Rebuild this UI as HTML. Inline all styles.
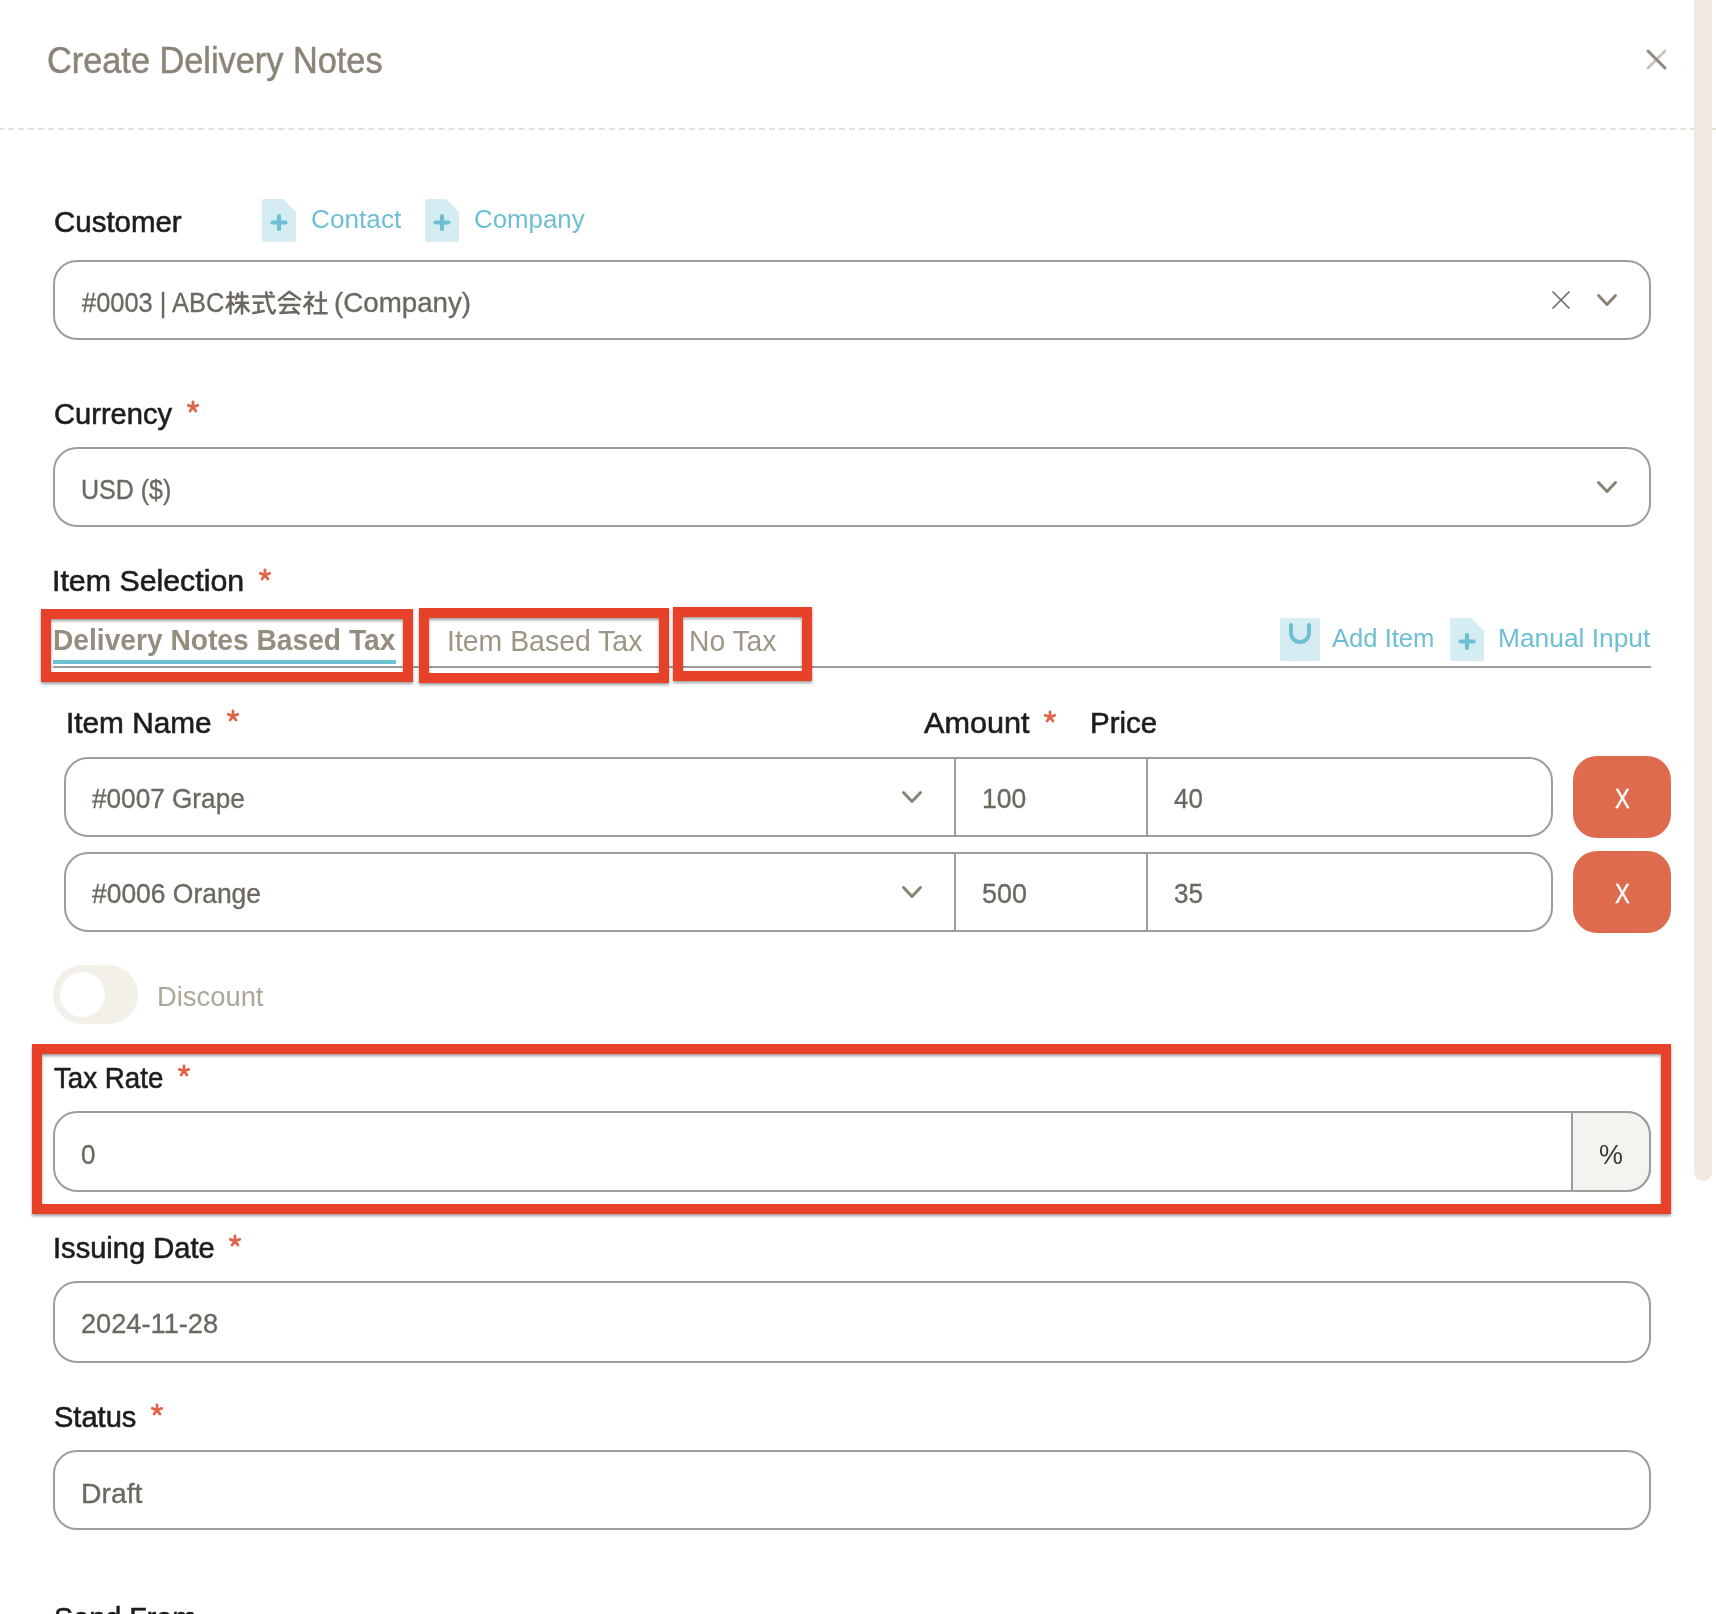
<!DOCTYPE html>
<html><head><meta charset="utf-8">
<style>
html,body{margin:0;padding:0;background:#fff;}
body{width:1716px;height:1614px;position:relative;overflow:hidden;font-family:"Liberation Sans",sans-serif;}
.t{position:absolute;white-space:nowrap;line-height:1;transform-origin:0 0;}
.box{position:absolute;box-sizing:border-box;border:2px solid #9d9d9d;background:transparent;}
.red{position:absolute;box-sizing:border-box;border:10px solid #e8412a;filter:drop-shadow(0.5px 2px 1.5px rgba(0,0,0,0.38));}
</style></head><body>
<svg style="position:absolute;left:0;top:128px" width="1716" height="2"><line x1="0" y1="1" x2="1716" y2="1" stroke="#e4e1d9" stroke-width="2" stroke-dasharray="6 4.012" stroke-dashoffset="2"/></svg>
<div style="position:absolute;left:1694px;top:-20px;width:18px;height:1201px;background:#f2eae1;border-radius:9px"></div>
<div class="box" style="left:53px;top:260px;width:1598px;height:80px;border-radius:24px;"></div>
<div class="box" style="left:53px;top:447px;width:1598px;height:80px;border-radius:24px;"></div>
<div class="box" style="left:64px;top:757px;width:1489px;height:80px;border-radius:24px;"></div>
<div class="box" style="left:64px;top:852px;width:1489px;height:80px;border-radius:24px;"></div>
<div class="box" style="left:53px;top:1111px;width:1598px;height:81px;border-radius:24px;"></div>
<div class="box" style="left:53px;top:1281px;width:1598px;height:82px;border-radius:24px;"></div>
<div class="box" style="left:53px;top:1450px;width:1598px;height:80px;border-radius:24px;"></div>
<div style="position:absolute;left:954px;top:757px;width:2px;height:80px;background:#9d9d9d"></div>
<div style="position:absolute;left:1146px;top:757px;width:2px;height:80px;background:#9d9d9d"></div>
<div style="position:absolute;left:954px;top:852px;width:2px;height:80px;background:#9d9d9d"></div>
<div style="position:absolute;left:1146px;top:852px;width:2px;height:80px;background:#9d9d9d"></div>
<div style="position:absolute;left:1571px;top:1111px;width:80px;height:81px;box-sizing:border-box;border:2px solid #9d9d9d;border-radius:0 24px 24px 0;background:#f5f3ef"></div>
<div style="position:absolute;left:53px;top:666px;width:1598px;height:2px;background:#9d9d9d"></div>
<div style="position:absolute;left:53px;top:660px;width:343px;height:4px;background:#6ec1d6"></div>
<div style="position:absolute;left:1573px;top:756px;width:98px;height:82px;border-radius:24px;background:#df6b4f"></div>
<div style="position:absolute;left:1573px;top:851px;width:98px;height:82px;border-radius:24px;background:#df6b4f"></div>
<div style="position:absolute;left:53px;top:965px;width:85px;height:59px;border-radius:30px;background:#f3efe9"></div>
<div style="position:absolute;left:60px;top:972px;width:45px;height:45px;border-radius:50%;background:#fff"></div>
<svg style="position:absolute;left:262px;top:199px" width="34" height="43" viewBox="0 0 34 43"><path d="M2 0 H21 L34 13 V41 Q34 43 32 43 H2 Q0 43 0 41 V2 Q0 0 2 0Z" fill="#d5ecf2"/><path d="M10.5 23.5 H23.5 M17.0 17.0 V30.0" stroke="#6dbfd3" stroke-width="4.2" stroke-linecap="round"/></svg>
<svg style="position:absolute;left:425px;top:199px" width="34" height="43" viewBox="0 0 34 43"><path d="M2 0 H21 L34 13 V41 Q34 43 32 43 H2 Q0 43 0 41 V2 Q0 0 2 0Z" fill="#d5ecf2"/><path d="M10.5 23.5 H23.5 M17.0 17.0 V30.0" stroke="#6dbfd3" stroke-width="4.2" stroke-linecap="round"/></svg>
<svg style="position:absolute;left:1450px;top:618px" width="34" height="43" viewBox="0 0 34 43"><path d="M2 0 H21 L34 13 V41 Q34 43 32 43 H2 Q0 43 0 41 V2 Q0 0 2 0Z" fill="#d5ecf2"/><path d="M10.5 23.5 H23.5 M17.0 17.0 V30.0" stroke="#6dbfd3" stroke-width="4.2" stroke-linecap="round"/></svg>
<svg style="position:absolute;left:1280px;top:618px" width="40" height="43" viewBox="0 0 40 43"><rect x="0" y="0" width="40" height="43" rx="2" fill="#d5ecf2"/><path d="M11 7 V15 A9 9 0 0 0 29 15 V7" fill="none" stroke="#6dbfd3" stroke-width="4" stroke-linecap="round"/></svg>
<svg style="position:absolute;left:1595px;top:292px" width="24" height="16" viewBox="-2 -2 24 16"><path d="M1.5 1.5 L10.0 10.5 L18.5 1.5" fill="none" stroke="#8a8477" stroke-width="3" stroke-linecap="round" stroke-linejoin="round"/></svg>
<svg style="position:absolute;left:1595px;top:479px" width="24" height="16" viewBox="-2 -2 24 16"><path d="M1.5 1.5 L10.0 10.5 L18.5 1.5" fill="none" stroke="#8a8477" stroke-width="3" stroke-linecap="round" stroke-linejoin="round"/></svg>
<svg style="position:absolute;left:900px;top:789px" width="24" height="16" viewBox="-2 -2 24 16"><path d="M1.5 1.5 L10.0 10.5 L18.5 1.5" fill="none" stroke="#8a8477" stroke-width="3" stroke-linecap="round" stroke-linejoin="round"/></svg>
<svg style="position:absolute;left:900px;top:884px" width="24" height="16" viewBox="-2 -2 24 16"><path d="M1.5 1.5 L10.0 10.5 L18.5 1.5" fill="none" stroke="#8a8477" stroke-width="3" stroke-linecap="round" stroke-linejoin="round"/></svg>
<svg style="position:absolute;left:1550px;top:289px" width="22" height="22" viewBox="0 0 22 22"><path d="M3 3 L19 19 M19 3 L3 19" stroke="#716d64" stroke-width="1.7" stroke-linecap="round"/></svg>
<svg style="position:absolute;left:1644.6px;top:47.6px" width="24" height="24" viewBox="0 0 24 24"><path d="M20 3 L3 20" stroke="#cbc7bf" stroke-width="3" stroke-linecap="round"/><path d="M3 3 L20 20" stroke="#8f897d" stroke-width="3" stroke-linecap="round"/></svg>
<svg style="position:absolute;left:179.00px;top:393.00px" width="28" height="28" viewBox="0 0 28 28"><path d="M14.00 14.00 L14.00 9.00 M14.00 14.00 L9.24 12.45 M14.00 14.00 L11.06 18.05 M14.00 14.00 L16.94 18.05 M14.00 14.00 L18.76 12.45" stroke="#e0654a" stroke-width="2.8" stroke-linecap="round"/></svg>
<svg style="position:absolute;left:251.20px;top:561.00px" width="28" height="28" viewBox="0 0 28 28"><path d="M14.00 14.00 L14.00 9.00 M14.00 14.00 L9.24 12.45 M14.00 14.00 L11.06 18.05 M14.00 14.00 L16.94 18.05 M14.00 14.00 L18.76 12.45" stroke="#e0654a" stroke-width="2.8" stroke-linecap="round"/></svg>
<svg style="position:absolute;left:218.60px;top:702.00px" width="28" height="28" viewBox="0 0 28 28"><path d="M14.00 14.00 L14.00 9.00 M14.00 14.00 L9.24 12.45 M14.00 14.00 L11.06 18.05 M14.00 14.00 L16.94 18.05 M14.00 14.00 L18.76 12.45" stroke="#e0654a" stroke-width="2.8" stroke-linecap="round"/></svg>
<svg style="position:absolute;left:1035.60px;top:702.80px" width="28" height="28" viewBox="0 0 28 28"><path d="M14.00 14.00 L14.00 9.00 M14.00 14.00 L9.24 12.45 M14.00 14.00 L11.06 18.05 M14.00 14.00 L16.94 18.05 M14.00 14.00 L18.76 12.45" stroke="#e0654a" stroke-width="2.8" stroke-linecap="round"/></svg>
<svg style="position:absolute;left:170.30px;top:1057.30px" width="28" height="28" viewBox="0 0 28 28"><path d="M14.00 14.00 L14.00 9.00 M14.00 14.00 L9.24 12.45 M14.00 14.00 L11.06 18.05 M14.00 14.00 L16.94 18.05 M14.00 14.00 L18.76 12.45" stroke="#e0654a" stroke-width="2.8" stroke-linecap="round"/></svg>
<svg style="position:absolute;left:221.00px;top:1227.20px" width="28" height="28" viewBox="0 0 28 28"><path d="M14.00 14.00 L14.00 9.00 M14.00 14.00 L9.24 12.45 M14.00 14.00 L11.06 18.05 M14.00 14.00 L16.94 18.05 M14.00 14.00 L18.76 12.45" stroke="#e0654a" stroke-width="2.8" stroke-linecap="round"/></svg>
<svg style="position:absolute;left:142.60px;top:1396.30px" width="28" height="28" viewBox="0 0 28 28"><path d="M14.00 14.00 L14.00 9.00 M14.00 14.00 L9.24 12.45 M14.00 14.00 L11.06 18.05 M14.00 14.00 L16.94 18.05 M14.00 14.00 L18.76 12.45" stroke="#e0654a" stroke-width="2.8" stroke-linecap="round"/></svg>
<svg style="position:absolute;left:220px;top:285px" width="120" height="40" viewBox="0 0 1716 572"><path d="M90 170 H210 M150 90 V425 M150 235 L85 335 M160 245 L205 290 M262 110 L222 215 M235 165 H405 M215 255 H415 M315 90 V425 M310 270 L210 400 M320 270 L420 385 M460 165 H785 M710 98 L752 130 M660 90 Q675 300 740 400 Q765 430 790 350 M475 255 H625 M550 255 V385 M462 405 L640 368 M832 225 L990 98 L1158 215 M905 205 H1075 M845 285 H1145 M952 292 L885 398 M850 402 L1110 387 M1040 325 L1135 418 M1272 90 V135 M1205 170 H1325 L1195 320 M1272 240 V425 M1285 255 L1335 310 M1442 90 V400 M1355 220 H1530 M1335 405 H1540" fill="none" stroke="#6c685f" stroke-width="36" stroke-linecap="butt" stroke-linejoin="miter"/></svg>
<div class="t" style="left:47.05px;top:42.72px;font-size:36px;color:#8b8478;transform:scaleX(0.9530);-webkit-text-stroke:0.5px #8b8478;">Create Delivery Notes</div>
<div class="t" style="left:54.03px;top:206.79px;font-size:30.25px;color:#1f1d19;transform:scaleX(0.9738);-webkit-text-stroke:0.6px #1f1d19;">Customer</div>
<div class="t" style="left:53.64px;top:398.79px;font-size:30.25px;color:#1f1d19;transform:scaleX(0.9623);-webkit-text-stroke:0.6px #1f1d19;">Currency</div>
<div class="t" style="left:52.49px;top:565.79px;font-size:30.25px;color:#1f1d19;transform:scaleX(1.0027);-webkit-text-stroke:0.6px #1f1d19;">Item Selection</div>
<div class="t" style="left:66.23px;top:707.99px;font-size:30.25px;color:#1f1d19;transform:scaleX(0.9848);-webkit-text-stroke:0.6px #1f1d19;">Item Name</div>
<div class="t" style="left:923.80px;top:708.39px;font-size:30.25px;color:#1f1d19;transform:scaleX(1.0114);-webkit-text-stroke:0.6px #1f1d19;">Amount</div>
<div class="t" style="left:1089.75px;top:708.39px;font-size:30.25px;color:#1f1d19;transform:scaleX(0.9742);-webkit-text-stroke:0.6px #1f1d19;">Price</div>
<div class="t" style="left:54.00px;top:1062.79px;font-size:30.25px;color:#1f1d19;transform:scaleX(0.9160);-webkit-text-stroke:0.6px #1f1d19;">Tax Rate</div>
<div class="t" style="left:53.38px;top:1232.99px;font-size:30.25px;color:#1f1d19;transform:scaleX(0.9618);-webkit-text-stroke:0.6px #1f1d19;">Issuing Date</div>
<div class="t" style="left:53.64px;top:1401.89px;font-size:30.25px;color:#1f1d19;transform:scaleX(0.9600);-webkit-text-stroke:0.6px #1f1d19;">Status</div>
<div class="t" style="left:53.65px;top:1602.59px;font-size:30.25px;color:#1f1d19;transform:scaleX(0.9510);-webkit-text-stroke:0.6px #1f1d19;">Send From</div>
<div class="t" style="left:82.00px;top:288.99px;font-size:28.0px;color:#6c685f;transform:scaleX(0.9077);-webkit-text-stroke:0.35px #6c685f;">#0003 | ABC</div>
<div class="t" style="left:334.41px;top:288.99px;font-size:28.0px;color:#6c685f;transform:scaleX(0.9897);-webkit-text-stroke:0.35px #6c685f;">(Company)</div>
<div class="t" style="left:81.21px;top:475.99px;font-size:28.0px;color:#6c685f;transform:scaleX(0.8929);-webkit-text-stroke:0.35px #6c685f;">USD ($)</div>
<div class="t" style="left:92.20px;top:784.99px;font-size:28.0px;color:#6c685f;transform:scaleX(0.9344);-webkit-text-stroke:0.35px #6c685f;">#0007 Grape</div>
<div class="t" style="left:92.00px;top:879.99px;font-size:28.0px;color:#6c685f;transform:scaleX(0.9438);-webkit-text-stroke:0.35px #6c685f;">#0006 Orange</div>
<div class="t" style="left:982.01px;top:784.79px;font-size:28.0px;color:#6c685f;transform:scaleX(0.9455);-webkit-text-stroke:0.35px #6c685f;">100</div>
<div class="t" style="left:981.84px;top:880.19px;font-size:28.0px;color:#6c685f;transform:scaleX(0.9600);-webkit-text-stroke:0.35px #6c685f;">500</div>
<div class="t" style="left:1174.30px;top:784.79px;font-size:28.0px;color:#6c685f;transform:scaleX(0.9258);-webkit-text-stroke:0.35px #6c685f;">40</div>
<div class="t" style="left:1173.57px;top:880.19px;font-size:28.0px;color:#6c685f;transform:scaleX(0.9267);-webkit-text-stroke:0.35px #6c685f;">35</div>
<div class="t" style="left:81.07px;top:1140.99px;font-size:28.0px;color:#6c685f;transform:scaleX(0.9286);-webkit-text-stroke:0.35px #6c685f;">0</div>
<div class="t" style="left:81.03px;top:1309.99px;font-size:28.0px;color:#6c685f;transform:scaleX(0.9712);-webkit-text-stroke:0.35px #6c685f;">2024-11-28</div>
<div class="t" style="left:80.98px;top:1479.99px;font-size:28.0px;color:#6c685f;transform:scaleX(1.0119);-webkit-text-stroke:0.35px #6c685f;">Draft</div>
<div class="t" style="left:311.01px;top:205.86px;font-size:26.5px;color:#6dbfd3;transform:scaleX(0.9890);">Contact</div>
<div class="t" style="left:473.82px;top:205.86px;font-size:26.5px;color:#6dbfd3;transform:scaleX(0.9752);">Company</div>
<div class="t" style="left:1332.40px;top:625.26px;font-size:26.5px;color:#6dbfd3;transform:scaleX(0.9657);">Add Item</div>
<div class="t" style="left:1498.41px;top:625.26px;font-size:26.5px;color:#6dbfd3;transform:scaleX(0.9940);">Manual Input</div>
<div class="t" style="left:52.61px;top:625.17px;font-size:29.8px;color:#958d7f;font-weight:700;transform:scaleX(0.9453);">Delivery Notes Based Tax</div>
<div class="t" style="left:447.49px;top:626.07px;font-size:29.8px;color:#9d9585;transform:scaleX(0.9537);">Item Based Tax</div>
<div class="t" style="left:688.80px;top:626.07px;font-size:29.8px;color:#9d9585;transform:scaleX(0.9478);">No Tax</div>
<div class="t" style="left:157.17px;top:983.84px;font-size:27px;color:#aca797;transform:scaleX(1.0136);">Discount</div>
<div class="t" style="left:1614.50px;top:785.02px;font-size:27.5px;color:#ffffff;transform:scaleX(0.8056);-webkit-text-stroke:0.4px #ffffff;">X</div>
<div class="t" style="left:1614.50px;top:880.02px;font-size:27.5px;color:#ffffff;transform:scaleX(0.8056);-webkit-text-stroke:0.4px #ffffff;">X</div>
<div class="t" style="left:1598.52px;top:1141.42px;font-size:27.5px;color:#3a3834;transform:scaleX(0.9783);">%</div>
<div class="red" style="left:41px;top:609px;width:372px;height:73px"></div>
<div class="red" style="left:419px;top:608px;width:250px;height:75px"></div>
<div class="red" style="left:673px;top:607px;width:139px;height:74px"></div>
<div class="red" style="left:32px;top:1044px;width:1639px;height:170px"></div>
</body></html>
